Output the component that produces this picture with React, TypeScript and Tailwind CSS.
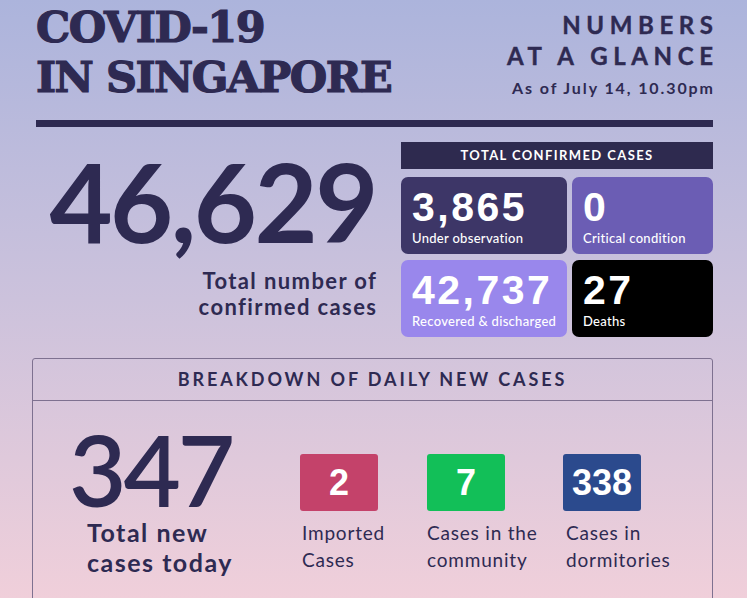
export default function App() {
  const cards = [
    { n: "3,865", l: "Under observation", c: "bg-[#3d3667]" },
    { n: "0", l: "Critical condition", c: "bg-[#6b5db4]" },
    { n: "42,737", l: "Recovered & discharged", c: "bg-[#9987ec]" },
    { n: "27", l: "Deaths", c: "bg-black" },
  ];
  const tiles = [
    { n: "2", c: "bg-[#c4426a]", l1: "Imported", l2: "Cases", w: "w-[127px]", ml: "ml-[2px]" },
    { n: "7", c: "bg-[#12bf58]", l1: "Cases in the", l2: "community", w: "w-[136px]", ml: "ml-0" },
    { n: "338", c: "bg-[#2b4a8d]", l1: "Cases in", l2: "dormitories", w: "w-[130px]", ml: "ml-[3px]" },
  ];
  return (
    <div className="h-[598px] w-full overflow-hidden bg-gradient-to-b from-[#acb4dc] via-[#ccc2dc] to-[#f0cfda] text-[#2e2a52]">
      <div className="pl-[36px] pr-[34px]">
        <div className="flex justify-between pt-[2px]">
          <h1 className="font-['DejaVu_Serif',serif] font-bold text-[43px] leading-[50px] tracking-[-1.5px] [-webkit-text-stroke:1.2px_#2e2a52]">
            COVID-19
            <br />
            IN SINGAPORE
          </h1>
          <div className="mt-[7px] text-right font-['Lato',sans-serif] font-bold">
            <div className="text-[24px] leading-[31px] tracking-[5.6px] mr-[-5.6px] [-webkit-text-stroke:0.4px_#2e2a52]">
              NUMBERS
              <br />
              AT A GLANCE
            </div>
            <div className="mt-[7px] text-[16px] leading-[20px] tracking-[1.9px] mr-[-1.9px]">
              As of July 14, 10.30pm
            </div>
          </div>
        </div>
        <div className="mt-[18px] h-[7px] bg-[#2e2a52]" />
        <div className="mt-[15px] flex">
          <div className="flex-1 pr-[25px] text-right font-['Lato',sans-serif]">
            <div className="mt-[4px] text-[109px] leading-none font-bold tracking-[-2.5px]">46,629</div>
            <div className="mt-[13px] text-[22px] leading-[26px] font-bold tracking-[1.4px] mr-[-1.4px]">
              Total number of
              <br />
              confirmed cases
            </div>
          </div>
          <div className="w-[312px]">
            <div className="h-[27px] bg-[#2e2a4f] flex items-center justify-center text-white font-['Lato',sans-serif] font-bold text-[13px] tracking-[1.4px]">
              TOTAL CONFIRMED CASES
            </div>
            <div className="mt-[8px] grid grid-cols-[166px_141px] gap-x-[5px] gap-y-[6px]">
              {cards.map((c) => (
                <div key={c.l} className={`h-[77px] rounded-[7px] pl-[11px] pt-[11px] text-white ${c.c}`}>
                  <div className="font-['Liberation_Sans',sans-serif] font-bold text-[41px] leading-[38px] tracking-[2.5px]">
                    {c.n}
                  </div>
                  <div className="mt-[4px] whitespace-nowrap font-['Lato',sans-serif] font-medium text-[13px] leading-[16px] tracking-[0.3px]">
                    {c.l}
                  </div>
                </div>
              ))}
            </div>
          </div>
        </div>
        <div className="mt-[21px] ml-[-4px] h-[260px] rounded-[3px] border border-[#7e7190]">
          <div className="h-[42px] border-b border-[#7e7190] text-center font-['Lato',sans-serif] font-bold text-[18px] leading-[41px] tracking-[2.9px]">
            BREAKDOWN OF DAILY NEW CASES
          </div>
          <div className="flex pt-[28px] font-['Lato',sans-serif]">
            <div className="w-[267px] pl-[36px]">
              <div className="text-[99px] leading-[80px] font-semibold tracking-[-3px]">347</div>
              <div className="mt-[8px] ml-[18px] text-[25px] leading-[30px] font-bold tracking-[1.5px]">
                Total new
                <br />
                cases today
              </div>
            </div>
            {tiles.map((t) => (
              <div key={t.n} className={`${t.w} mt-[25px]`}>
                <div
                  className={`h-[57px] w-[78px] rounded-[3px] flex items-center justify-center text-white font-['Liberation_Sans',sans-serif] font-bold text-[36px] leading-none ${t.c}`}
                >
                  {t.n}
                </div>
                <div className={`mt-[8px] ${t.ml} text-[19px] leading-[27px] tracking-[0.8px]`}>
                  {t.l1}
                  <br />
                  {t.l2}
                </div>
              </div>
            ))}
          </div>
        </div>
      </div>
    </div>
  );
}
